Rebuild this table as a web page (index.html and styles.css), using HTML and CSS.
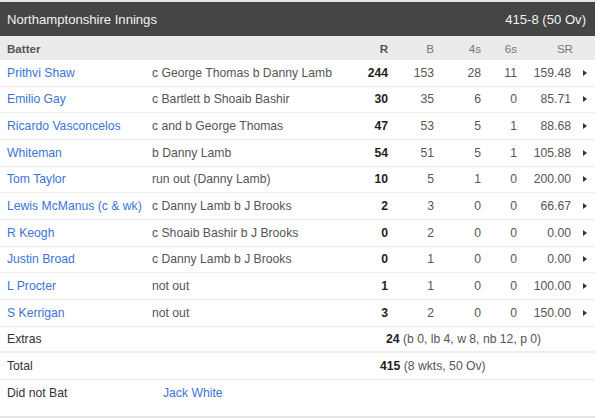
FILE: index.html
```html
<!DOCTYPE html>
<html>
<head>
<meta charset="utf-8">
<link rel="stylesheet" href="styles.css">
</head>
<body>
<div class="card">
  <div class="title">
    <span>Northamptonshire Innings</span>
    <span>415-8 (50 Ov)</span>
  </div>
  <div class="row head">
    <span class="batter">Batter</span>
    <span></span>
    <span class="num bold">R</span>
    <span class="num">B</span>
    <span class="num">4s</span>
    <span class="num">6s</span>
    <span class="num sr">SR</span>
    <span></span>
  </div>
  <div class="row"><a class="name">Prithvi Shaw</a><span class="how">c George Thomas b Danny Lamb</span><span class="num runs">244</span><span class="num">153</span><span class="num">28</span><span class="num">11</span><span class="num">159.48</span><span class="arrow"></span></div>
  <div class="row"><a class="name">Emilio Gay</a><span class="how">c Bartlett b Shoaib Bashir</span><span class="num runs">30</span><span class="num">35</span><span class="num">6</span><span class="num">0</span><span class="num">85.71</span><span class="arrow"></span></div>
  <div class="row"><a class="name">Ricardo Vasconcelos</a><span class="how">c and b George Thomas</span><span class="num runs">47</span><span class="num">53</span><span class="num">5</span><span class="num">1</span><span class="num">88.68</span><span class="arrow"></span></div>
  <div class="row"><a class="name">Whiteman</a><span class="how">b Danny Lamb</span><span class="num runs">54</span><span class="num">51</span><span class="num">5</span><span class="num">1</span><span class="num">105.88</span><span class="arrow"></span></div>
  <div class="row"><a class="name">Tom Taylor</a><span class="how">run out (Danny Lamb)</span><span class="num runs">10</span><span class="num">5</span><span class="num">1</span><span class="num">0</span><span class="num">200.00</span><span class="arrow"></span></div>
  <div class="row"><a class="name">Lewis McManus (c &amp; wk)</a><span class="how">c Danny Lamb b J Brooks</span><span class="num runs">2</span><span class="num">3</span><span class="num">0</span><span class="num">0</span><span class="num">66.67</span><span class="arrow"></span></div>
  <div class="row"><a class="name">R Keogh</a><span class="how">c Shoaib Bashir b J Brooks</span><span class="num runs">0</span><span class="num">2</span><span class="num">0</span><span class="num">0</span><span class="num">0.00</span><span class="arrow"></span></div>
  <div class="row"><a class="name">Justin Broad</a><span class="how">c Danny Lamb b J Brooks</span><span class="num runs">0</span><span class="num">1</span><span class="num">0</span><span class="num">0</span><span class="num">0.00</span><span class="arrow"></span></div>
  <div class="row"><a class="name">L Procter</a><span class="how">not out</span><span class="num runs">1</span><span class="num">1</span><span class="num">0</span><span class="num">0</span><span class="num">100.00</span><span class="arrow"></span></div>
  <div class="row"><a class="name">S Kerrigan</a><span class="how">not out</span><span class="num runs">3</span><span class="num">2</span><span class="num">0</span><span class="num">0</span><span class="num">150.00</span><span class="arrow"></span></div>
  <div class="line extras"><span class="label">Extras</span><span class="value v-extras"><b>24</b> (b 0, lb 4, w 8, nb 12, p 0)</span></div>
  <div class="line total"><span class="label">Total</span><span class="value v-total"><b>415</b> (8 wkts, 50 Ov)</span></div>
  <div class="line dnb"><span class="label">Did not Bat</span><a class="name dnb-name">Jack White</a></div>
</div>
</body>
</html>
```
FILE: styles.css
```css
* { box-sizing: border-box; }
body {
  margin: 0;
  background: #fff;
  font-family: "Liberation Sans", Arial, sans-serif;
  font-size: 12.2px;
  color: #333;
}
.card {
  width: 595px;
  border-top: 2px solid #e3e3e3;
  border-bottom: 3px solid #e6e6e6;
}
.title {
  height: 34px;
  background: #454545;
  color: #f2f2f2;
  font-size: 13.1px;
  display: flex;
  justify-content: space-between;
  align-items: center;
  padding: 0 9px 0 7px;
}
.row {
  display: grid;
  grid-template-columns: 145px 196px 40px 46px 47px 36px 54px 24px;
  align-items: center;
  padding-left: 7px;
  height: 26.67px;
  border-bottom: 1px solid #ececec;
  color: #555;
}
.row.head {
  height: 24px;
  background: #ebebeb;
  border-bottom: none;
  color: #777;
  font-size: 11.6px;
}
.batter { font-weight: bold; color: #555; }
.bold { font-weight: bold; color: #555; }
.num { text-align: right; }
.sr { margin-right: -2px; }
.name { color: #3c74d6; text-decoration: none; white-space: nowrap; }
.how { white-space: nowrap; }
.runs { font-weight: bold; color: #222; }
.arrow {
  justify-self: start;
  margin-left: 12px;
  width: 0;
  height: 0;
  border-top: 3px solid transparent;
  border-bottom: 3px solid transparent;
  border-left: 4px solid #333;
}
.line {
  display: flex;
  align-items: center;
  padding-left: 7px;
  height: 26.67px;
  border-bottom: 1px solid #ececec;
  color: #333;
}
.line.extras { border-bottom-width: 2px; }
.label { width: 145px; }
.value { color: #555; }
.value b { color: #222; }
.v-extras { margin-left: 234px; }
.v-total { margin-left: 228px; }
.line.dnb {
  height: 36px;
  align-items: flex-start;
  padding-top: 6px;
  border-bottom: none;
}
.dnb-name { margin-left: 11px; }
```
